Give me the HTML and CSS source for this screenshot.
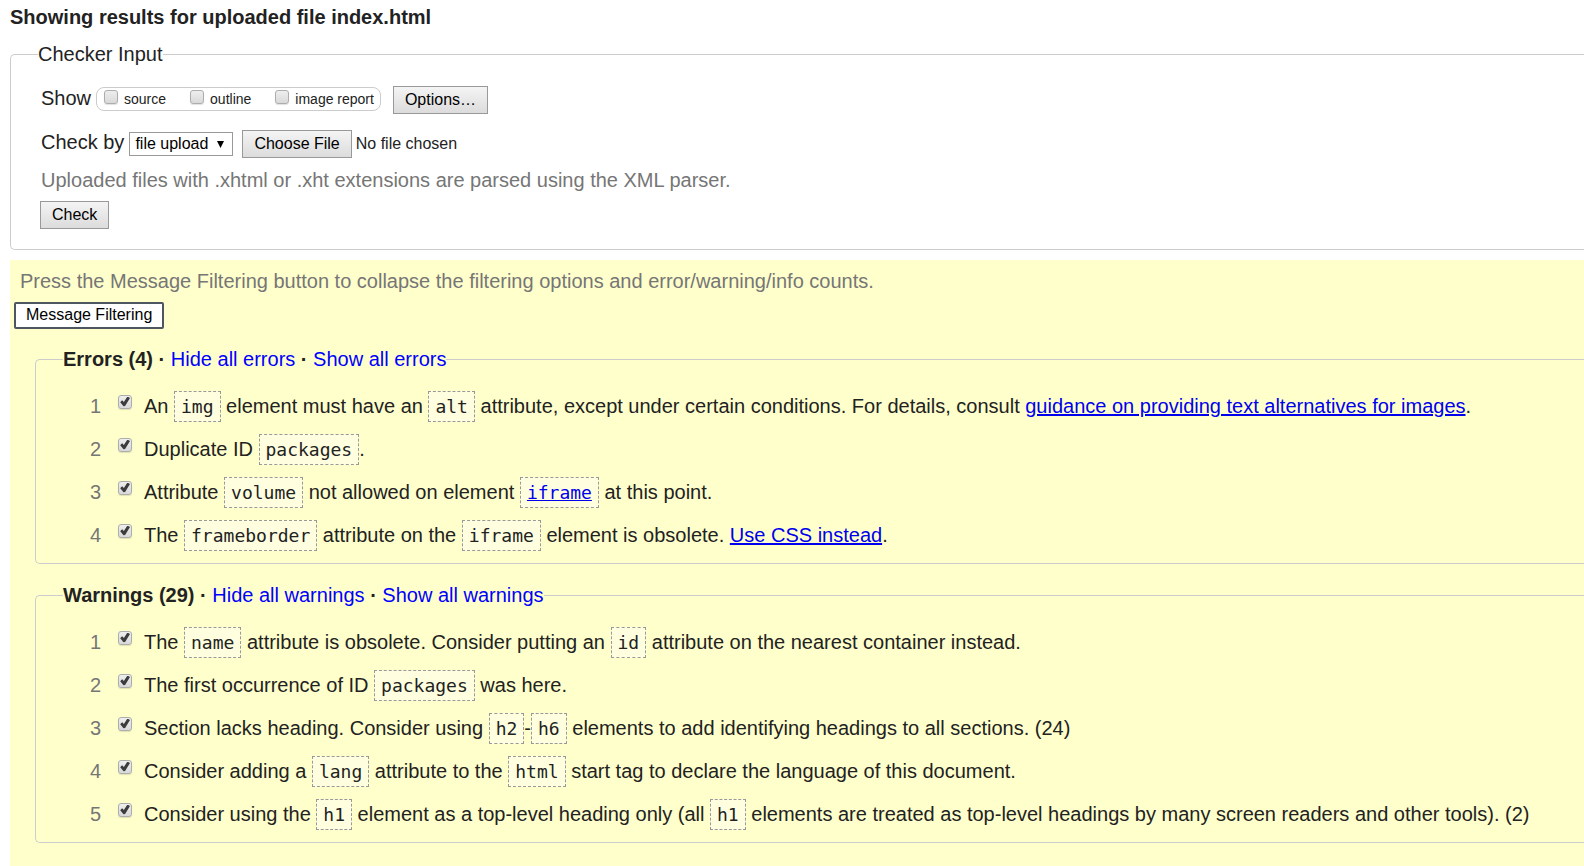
FILE: index.html
```html
<!DOCTYPE html>
<html lang="en">
<head>
<meta charset="utf-8">
<title>Showing results for uploaded file index.html</title>
<link rel="stylesheet" href="styles.css">
</head>
<body>
<h1 class="title">Showing results for uploaded file index.html</h1>
<form class="checker">
  <fieldset class="panel">
    <legend class="legend">Checker Input</legend>
    <div class="form-body">
      <div class="row">
        <span class="caption">Show</span>
        <span class="show-options">
          <span class="show-option"><input class="tick" type="checkbox" id="source"><label for="source">source</label></span>
          <span class="show-option"><input class="tick" type="checkbox" id="outline"><label for="outline">outline</label></span>
          <span class="show-option"><input class="tick" type="checkbox" id="images"><label for="images">image report</label></span>
        </span>
        <button class="button options" type="button">Options…</button>
      </div>
      <div class="row row-source">
        <label class="caption" for="method">Check by</label>
        <select class="method" id="method"><option>file upload</option><option>address</option><option>text input</option></select>
        <input class="file" type="file" aria-label="File to check">
      </div>
      <p class="hint">Uploaded files with .xhtml or .xht extensions are parsed using the XML parser.</p>
      <button class="button" type="button">Check</button>
    </div>
  </fieldset>
</form>
<main class="results">
  <p class="hint results-hint">Press the Message Filtering button to collapse the filtering options and error/warning/info counts.</p>
  <button class="filter-button" type="button">Message Filtering</button>
  <fieldset class="panel group">
    <legend class="legend"><b>Errors (4) · </b><a class="toggle" href="#hide">Hide all errors</a><b> · </b><a class="toggle" href="#show">Show all errors</a></legend>
    <ol class="messages">
      <li class="message"><span class="number">1</span><input class="tick" type="checkbox" id="e1" checked><label for="e1">An <code>img</code> element must have an <code>alt</code> attribute, except under certain conditions. For details, consult <a href="#alt">guidance on providing text alternatives for images</a>.</label></li>
      <li class="message"><span class="number">2</span><input class="tick" type="checkbox" id="e2" checked><label for="e2">Duplicate ID <code>packages</code>.</label></li>
      <li class="message"><span class="number">3</span><input class="tick" type="checkbox" id="e3" checked><label for="e3">Attribute <code>volume</code> not allowed on element <code><a href="#iframe">iframe</a></code> at this point.</label></li>
      <li class="message"><span class="number">4</span><input class="tick" type="checkbox" id="e4" checked><label for="e4">The <code>frameborder</code> attribute on the <code>iframe</code> element is obsolete. <a href="#css">Use CSS instead</a>.</label></li>
    </ol>
  </fieldset>
  <fieldset class="panel group">
    <legend class="legend"><b>Warnings (29) · </b><a class="toggle" href="#hide">Hide all warnings</a><b> · </b><a class="toggle" href="#show">Show all warnings</a></legend>
    <ol class="messages">
      <li class="message"><span class="number">1</span><input class="tick" type="checkbox" id="w1" checked><label for="w1">The <code>name</code> attribute is obsolete. Consider putting an <code>id</code> attribute on the nearest container instead.</label></li>
      <li class="message"><span class="number">2</span><input class="tick" type="checkbox" id="w2" checked><label for="w2">The first occurrence of ID <code>packages</code> was here.</label></li>
      <li class="message"><span class="number">3</span><input class="tick" type="checkbox" id="w3" checked><label for="w3">Section lacks heading. Consider using <code>h2</code>-<code>h6</code> elements to add identifying headings to all sections. (24)</label></li>
      <li class="message"><span class="number">4</span><input class="tick" type="checkbox" id="w4" checked><label for="w4">Consider adding a <code>lang</code> attribute to the <code>html</code> start tag to declare the language of this document.</label></li>
      <li class="message"><span class="number">5</span><input class="tick" type="checkbox" id="w5" checked><label for="w5">Consider using the <code>h1</code> element as a top-level heading only (all <code>h1</code> elements are treated as top-level headings by many screen readers and other tools). (2)</label></li>
    </ol>
  </fieldset>
</main>
</body>
</html>
```

FILE: styles.css
```css
* { box-sizing: border-box; }

body {
  display: flex;
  flex-direction: column;
  min-height: 100vh;
  margin: 0;
  padding: 5px 0 0 10px;
  background: #fff;
  color: #222;
  font: 20px/24px "Liberation Sans", Arial, sans-serif;
}

a { color: #00e; }

.title {
  margin: 0 0 13px;
  font-size: 20px;
}

.panel {
  min-width: 0;
  margin: 0;
  padding: 0 0 0 27px;
  border: 1px solid #ccc;
  border-right: 0;
  border-radius: 5px 0 0 5px;
}

.legend { padding: 0; }

/* Checker form */

.form-body { padding: 20px 0 20px 2px; }

.row {
  display: flex;
  align-items: center;
  height: 28px;
}

.row-source { margin-top: 16px; }

.caption {
  padding: 0 5px 4px 1px;
}

.show-options {
  display: flex;
  gap: 24px;
  height: 24px;
  margin-bottom: 2px;
  padding: 0 6px 0 7px;
  border: 1px solid #ccc;
  border-radius: 8px;
  font-size: 14px;
  line-height: 22px;
}

.show-option {
  display: flex;
  align-items: center;
  gap: 6px;
}

.button,
.file::file-selector-button {
  height: 28px;
  padding: 0 11px 1px;
  border: 1px solid #999;
  border-radius: 0;
  background: linear-gradient(#f4f4f4, #dcdcdc);
  color: #000;
  font: 16px/24px "Liberation Sans", Arial, sans-serif;
}

.button { display: block; }

.options { margin-left: 12px; }

.method {
  height: 24px;
  padding: 0 24px 1px 5px;
  appearance: none;
  border: 1px solid #999;
  border-radius: 0;
  background: #fff url("data:image/svg+xml,%3Csvg xmlns='http://www.w3.org/2000/svg' width='7' height='7'%3E%3Cpath d='M0 0h7L3.5 7z'/%3E%3C/svg%3E") no-repeat right 8px center;
  color: #000;
  font: 16px/21px "Liberation Sans", Arial, sans-serif;
}

.file {
  margin-left: 9px;
  color: #222;
  font: 16px/28px "Liberation Sans", Arial, sans-serif;
}

.hint {
  margin: 10px 0 9px 1px;
  color: #767676;
}

/* Check boxes */

.tick {
  display: grid;
  flex: none;
  place-items: center;
  width: 14px;
  height: 14px;
  margin: 0 0 5px;
  appearance: none;
  border: 1px solid #adadad;
  border-radius: 3px;
  background: linear-gradient(#eee, #d9d9d9);
  box-shadow: 0 1px 1px rgba(0, 0, 0, 0.12);
}

.tick:checked::before {
  width: 10px;
  height: 10px;
  background: #3c3c3c;
  clip-path: polygon(2% 58%, 21% 38%, 39% 55%, 74% 0%, 100% 14%, 51% 96%, 35% 98%);
  content: "";
}

/* Results */

.results {
  flex: 1;
  margin-top: 10px;
  padding: 9px 0 23px 25px;
  background: #ffc;
}

.results-hint { margin: 0 0 9px -15px; }

.filter-button {
  display: block;
  height: 27px;
  margin: 0 0 18px -21px;
  padding: 0 10px 2px;
  border: 2px solid #4d5761;
  border-radius: 2px;
  background: #fff;
  color: #000;
  font: 16px/20px "Liberation Sans", Arial, sans-serif;
}

.group { padding-bottom: 6px; }

.group + .group { margin-top: 19px; }

.toggle {
  color: #00f;
  text-decoration: none;
}

.messages {
  margin: 0;
  padding: 14px 0 0;
  list-style: none;
}

.message {
  display: flex;
  align-items: baseline;
  line-height: 43px;
}

.number {
  width: 38px;
  margin-right: 17px;
  color: #767676;
  text-align: right;
}

.message .tick {
  align-self: center;
  margin: 0 12px 10px 0;
}

code {
  padding: 4px 6px;
  border: 1px dashed #999;
  background: rgba(255, 255, 255, 0.4);
  font: 18px/24px "DejaVu Sans Mono", monospace;
}
```
